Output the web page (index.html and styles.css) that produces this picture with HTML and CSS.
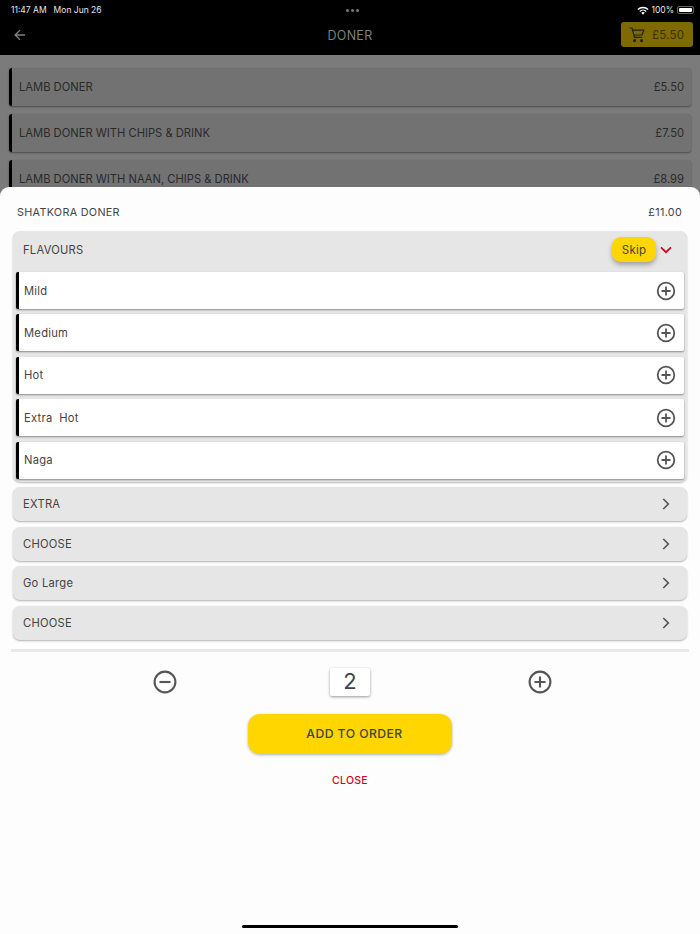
FILE: index.html
```html
<!DOCTYPE html>
<html lang="en">

<head>
    <meta charset="UTF-8">
    <meta name="viewport" content="width=device-width, initial-scale=1.0">
    <title>Doner</title>
    <link rel="stylesheet" href="styles.css">
</head>

<body>
    <div class="page">
        <!-- Top bar -->
        <header class="topbar">
            <div class="status">
                <div class="status-left"><span>11:47 AM</span><span>Mon Jun 26</span></div>
                <div class="status-dots"><i></i><i></i><i></i></div>
                <div class="status-right">
                    <svg class="wifi" width="12" height="9" viewBox="0 0 12 9">
                        <path d="M0.4 3A8 8 0 0 1 11.6 3L10.6 4A6.6 6.6 0 0 0 1.4 4Z" fill="#fff" />
                        <path d="M2.3 4.9A5.3 5.3 0 0 1 9.7 4.9L8.7 5.9A3.9 3.9 0 0 0 3.3 5.9Z" fill="#fff" />
                        <path d="M4.2 6.8A2.6 2.6 0 0 1 7.8 6.8L6 8.7Z" fill="#fff" />
                    </svg>
                    <span>100%</span>
                    <div class="battery"><div class="battery-fill"></div></div>
                </div>
            </div>
            <div class="navbar">
                <svg class="back" width="12" height="12" viewBox="0 0 14 14" fill="none" stroke="#7f7f7f" stroke-width="1.6">
                    <path d="M13 7H1.5M7 1.3L1.3 7L7 12.7" />
                </svg>
                <div class="nav-title">DONER</div>
                <div class="cart">
                    <svg width="16" height="16" viewBox="0 0 16 16" fill="none" stroke="#222" stroke-width="1.2">
                        <path d="M0.5 1H3L5.5 10.4H13.2" />
                        <path d="M3.5 3.2H14.8L13 8H4.8" />
                        <circle cx="5.6" cy="13.6" r="1" fill="#222" />
                        <circle cx="12.6" cy="13.6" r="1" fill="#222" />
                    </svg>
                    <span>£5.50</span>
                </div>
            </div>
        </header>

        <!-- Doner list behind the sheet -->
        <main class="menu-list">
            <div class="menu-row"><span>LAMB DONER</span><span>£5.50</span></div>
            <div class="menu-row"><span>LAMB DONER WITH CHIPS &amp; DRINK</span><span>£7.50</span></div>
            <div class="menu-row"><span>LAMB DONER WITH NAAN, CHIPS &amp; DRINK</span><span>£8.99</span></div>
        </main>

        <!-- Item sheet -->
        <section class="sheet">
            <div class="sheet-title"><span>SHATKORA DONER</span><span>£11.00</span></div>

            <div class="group group-open">
                <div class="group-head">
                    <span class="group-name">FLAVOURS</span>
                    <button class="skip">Skip</button>
                    <svg class="chev" width="12" height="8" viewBox="0 0 12 8" fill="none" stroke="#d0021b" stroke-width="1.7">
                        <path d="M1 1.3L6 6.2L11 1.3" />
                    </svg>
                </div>
                <div class="option"><span>Mild</span><svg class="circle-icon" viewBox="0 0 20 20"><circle cx="10" cy="10" r="8.3" /><path d="M10 5.5V14.5M5.5 10H14.5" /></svg></div>
                <div class="option"><span>Medium</span><svg class="circle-icon" viewBox="0 0 20 20"><circle cx="10" cy="10" r="8.3" /><path d="M10 5.5V14.5M5.5 10H14.5" /></svg></div>
                <div class="option"><span>Hot</span><svg class="circle-icon" viewBox="0 0 20 20"><circle cx="10" cy="10" r="8.3" /><path d="M10 5.5V14.5M5.5 10H14.5" /></svg></div>
                <div class="option"><span>Extra&nbsp; Hot</span><svg class="circle-icon" viewBox="0 0 20 20"><circle cx="10" cy="10" r="8.3" /><path d="M10 5.5V14.5M5.5 10H14.5" /></svg></div>
                <div class="option"><span>Naga</span><svg class="circle-icon" viewBox="0 0 20 20"><circle cx="10" cy="10" r="8.3" /><path d="M10 5.5V14.5M5.5 10H14.5" /></svg></div>
            </div>

            <div class="group group-closed"><span class="group-name">EXTRA</span><svg class="chev-right" width="8" height="12" viewBox="0 0 8 12"><path d="M1.3 1L6.3 6L1.3 11" /></svg></div>
            <div class="group group-closed"><span class="group-name">CHOOSE</span><svg class="chev-right" width="8" height="12" viewBox="0 0 8 12"><path d="M1.3 1L6.3 6L1.3 11" /></svg></div>
            <div class="group group-closed"><span class="group-name">Go Large</span><svg class="chev-right" width="8" height="12" viewBox="0 0 8 12"><path d="M1.3 1L6.3 6L1.3 11" /></svg></div>
            <div class="group group-closed"><span class="group-name">CHOOSE</span><svg class="chev-right" width="8" height="12" viewBox="0 0 8 12"><path d="M1.3 1L6.3 6L1.3 11" /></svg></div>

            <div class="divider"></div>

            <div class="stepper">
                <svg class="circle-icon big" viewBox="0 0 24 24"><circle cx="12" cy="12" r="10.4" /><path d="M6.5 12H17.5" /></svg>
                <div class="qty">2</div>
                <svg class="circle-icon big" viewBox="0 0 24 24"><circle cx="12" cy="12" r="10.4" /><path d="M12 6.5V17.5M6.5 12H17.5" /></svg>
            </div>

            <button class="add-btn">ADD TO ORDER</button>
            <div class="close-link">CLOSE</div>
            <div class="home-bar"></div>
        </section>
    </div>
</body>

</html>
```

FILE: styles.css
```css
* {
    box-sizing: border-box;
}

html,
body {
    margin: 0;
    height: 100%;
}

body {
    font-family: 'Inter', 'Liberation Sans', sans-serif;
    color: #444;
    background-color: #7b7b7b;
    overflow: hidden;
}

.page {
    position: relative;
    width: 700px;
    height: 934px;
    overflow: hidden;
}

/* top bar */
.topbar {
    height: 55px;
    background-color: #000;
}

.status {
    height: 17px;
    padding: 3px 6px 0 11px;
    display: grid;
    grid-template-columns: 1fr auto 1fr;
    align-items: center;
    color: #e6e6e6;
    font-size: 8.5px;
}

.status-left {
    display: flex;
    gap: 7px;
}

.status-dots {
    display: flex;
    gap: 2px;
}

.status-dots i {
    width: 3px;
    height: 3px;
    border-radius: 50%;
    background-color: #777;
}

.status-right {
    display: flex;
    justify-content: flex-end;
    align-items: center;
    gap: 2px;
}

.battery {
    width: 17px;
    height: 8px;
    margin-left: 1px;
    padding: 1px;
    border: 1px solid #666;
    border-radius: 2px;
}

.battery-fill {
    height: 100%;
    background-color: #fff;
    border-radius: 1px;
}

.navbar {
    height: 38px;
    padding: 0 7px 2px;
    display: grid;
    grid-template-columns: 1fr auto 1fr;
    align-items: center;
}

.back {
    margin-left: 7px;
}

.nav-title {
    color: #7f7f7f;
    font-size: 12.5px;
    font-weight: 400;
    letter-spacing: 0.3px;
}

.cart {
    justify-self: end;
    width: 72px;
    height: 25px;
    display: flex;
    align-items: center;
    gap: 7px;
    padding-left: 8px;
    margin-top: -1px;
    background-color: #7f6a00;
    border-radius: 3px;
    color: #3a3200;
    font-size: 11.5px;
    letter-spacing: 0.2px;
}

/* list behind sheet */
.menu-list {
    padding: 13px 9px 0;
    display: flex;
    flex-direction: column;
    gap: 8px;
}

.menu-row {
    height: 38px;
    flex-shrink: 0;
    padding: 0 7px 0 7px;
    display: flex;
    justify-content: space-between;
    align-items: center;
    background-color: #727272;
    border-left: 3px solid #000;
    border-radius: 3px;
    box-shadow: 0 1px 2px rgba(0, 0, 0, 0.4);
    color: #2a2a2a;
    font-size: 11.2px;
}

/* sheet */
.sheet {
    position: absolute;
    left: 0;
    right: 0;
    top: 187px;
    bottom: 0;
    padding: 0 13px;
    background-color: #fdfdfd;
    border-radius: 9px 9px 0 0;
}

.sheet-title {
    height: 44px;
    padding: 6px 5px 0 4px;
    display: flex;
    justify-content: space-between;
    align-items: center;
    font-size: 10.8px;
    letter-spacing: 0.3px;
}

.group {
    background-color: #e6e6e6;
    border-radius: 7px;
}

.group-open {
    padding: 0 3px 3px;
    box-shadow: 0 1px 2px rgba(0, 0, 0, 0.25);
}

.group-head {
    height: 41px;
    padding: 0 0 4px 7px;
    display: flex;
    align-items: center;
}

.group-name {
    flex: 1;
    font-size: 11.2px;
    letter-spacing: 0.25px;
}

.skip {
    width: 44px;
    height: 25px;
    padding: 0;
    margin: 0 4px 0 0;
    border: none;
    border-radius: 9px;
    background-color: #ffd600;
    box-shadow: 0 3px 5px rgba(0, 0, 0, 0.3);
    color: #444;
    font-family: inherit;
    font-size: 11.5px;
    letter-spacing: 0.2px;
}

.chev {
    margin-right: 12px;
}

.option {
    height: 37px;
    margin-bottom: 5.4px;
    padding: 0 8px 0 5px;
    display: flex;
    justify-content: space-between;
    align-items: center;
    background-color: #fff;
    border-left: 3px solid #000;
    border-radius: 2px;
    box-shadow: 0 1px 2px rgba(0, 0, 0, 0.4);
    font-size: 11.2px;
    letter-spacing: 0.25px;
}

.option:last-child {
    margin-bottom: 0;
}

.circle-icon {
    width: 20px;
    height: 20px;
    fill: none;
    stroke: #555;
    stroke-width: 1.8;
}

.circle-icon.big {
    width: 24px;
    height: 24px;
    stroke-width: 2.1;
}

.group-closed {
    height: 34px;
    margin-top: 5.6px;
    padding: 0 17px 0 10px;
    display: flex;
    align-items: center;
    box-shadow: 0 1px 2px rgba(0, 0, 0, 0.3);
}

.chev-right {
    fill: none;
    stroke: #555;
    stroke-width: 1.7;
}

.divider {
    height: 3px;
    margin: 9px -2px 0;
    background-color: #e8e8e8;
}

.stepper {
    margin-top: 16px;
    padding: 0 135px 0 140px;
    display: flex;
    justify-content: space-between;
    align-items: flex-start;
}

.stepper .circle-icon {
    margin-top: 2px;
}

.qty {
    width: 40px;
    height: 28px;
    margin-right: 5px;
    background-color: #fff;
    box-shadow: 0 1px 3px rgba(0, 0, 0, 0.4);
    border-radius: 2px;
    text-align: center;
    line-height: 26px;
    font-size: 22px;
    font-weight: 400;
}

.add-btn {
    display: block;
    width: 204px;
    height: 40px;
    margin: 18px auto 0;
    padding: 0 0 0 9px;
    border: none;
    border-radius: 12px;
    background-color: #ffd600;
    box-shadow: 0 1px 3px rgba(0, 0, 0, 0.3);
    color: #444;
    font-family: inherit;
    font-size: 12.2px;
    font-weight: 500;
    letter-spacing: 0.45px;
}

.close-link {
    margin-top: 20px;
    text-align: center;
    color: #d0021b;
    font-size: 10.5px;
    font-weight: 500;
    letter-spacing: 0.3px;
}

.home-bar {
    position: absolute;
    left: 242px;
    bottom: 6px;
    width: 216px;
    height: 3px;
    border-radius: 2px;
    background-color: #000;
}
```
